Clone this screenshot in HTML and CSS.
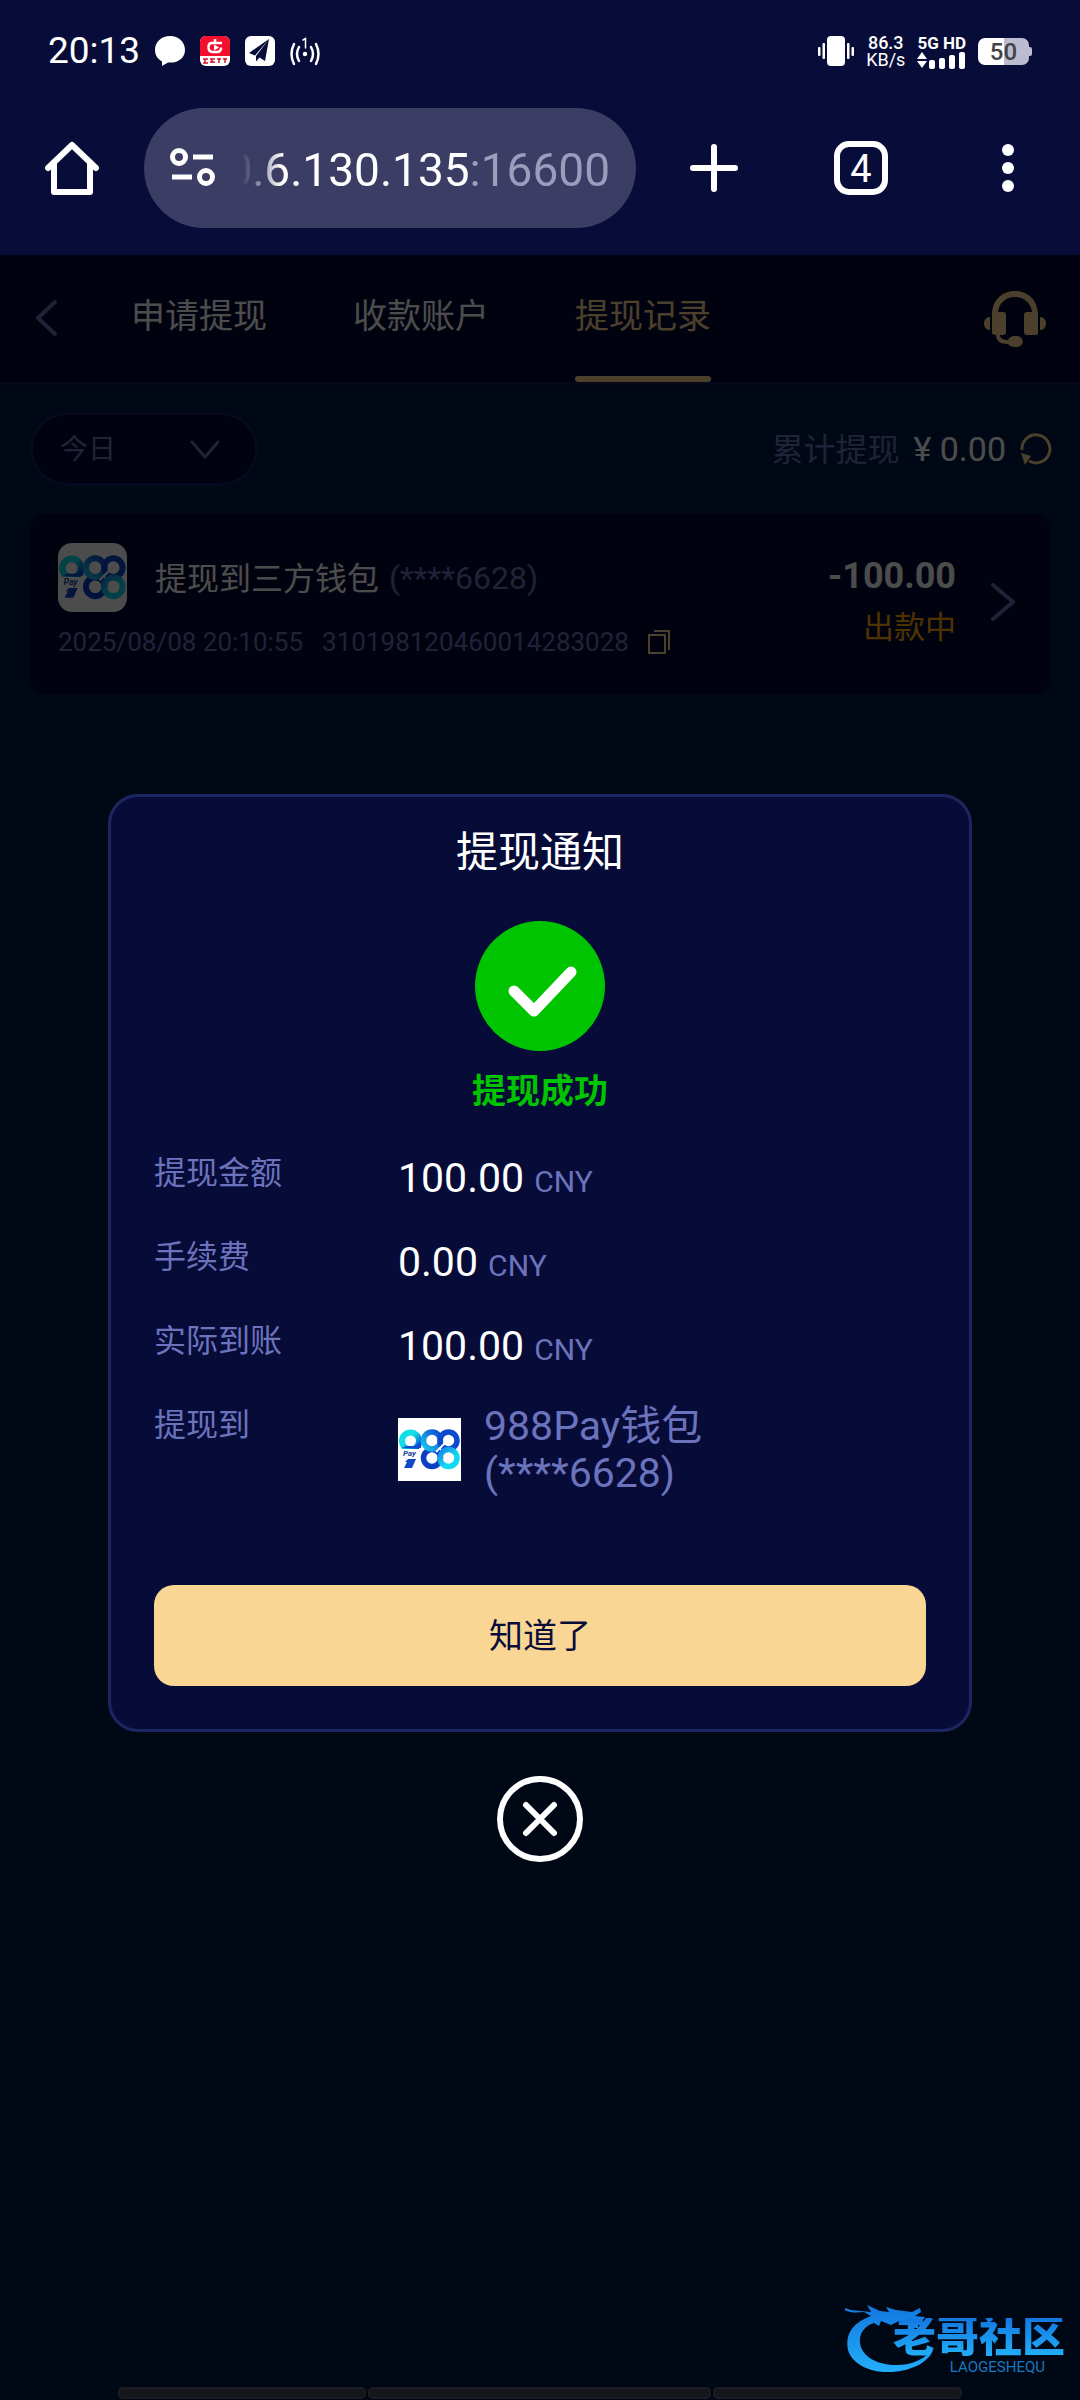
FILE: index.html
```html
<!DOCTYPE html>
<html lang="zh-CN">
<head>
    <meta charset="UTF-8">
    <title>提现记录</title>
    <meta name="viewport" content="width=device-width, initial-scale=1.0">
    <link rel="stylesheet" href="styles.css">
</head>
<body>
    <!-- shared 988Pay logo -->
    <svg class="defs" width="0" height="0" aria-hidden="true">
        <defs>
            <linearGradient id="nine" x1="0" y1="0" x2="1" y2="1">
                <stop offset="0.4" stop-color="#10e0e6"/>
                <stop offset="1" stop-color="#0a3fd6"/>
            </linearGradient>
            <linearGradient id="ring-top" x1="0" y1="1" x2="1" y2="0">
                <stop offset="0" stop-color="#18c8ee"/>
                <stop offset="1" stop-color="#0d49cf"/>
            </linearGradient>
            <linearGradient id="ring-bottom" x1="0" y1="0" x2="1" y2="1">
                <stop offset="0" stop-color="#1685ea"/>
                <stop offset="0.6" stop-color="#12d8f0"/>
            </linearGradient>
            <symbol id="logo-988" viewBox="0 0 63 63">
                <rect width="63" height="63" fill="#fff"/>
                <circle cx="12.500" cy="23" r="8.500" fill="none" stroke="url(#nine)" stroke-width="6"/>
                <path d="M4 30h19l1-8-7 6H8z" fill="#0d4fd0"/>
                <rect x="3" y="31" width="19" height="9" fill="#fff"/>
                <text x="5" y="38" class="logo-pay">Pay</text>
                <path d="M10 41h8l-4 9H6l3-6h-2z" fill="#0c48c8"/>
                <circle cx="34" cy="40" r="8.500" fill="none" stroke="#0b3fc4" stroke-width="5.500"/>
                <circle cx="34" cy="22.500" r="8.500" fill="none" stroke="url(#ring-top)" stroke-width="5.500"/>
                <circle cx="50.500" cy="22.500" r="8.500" fill="none" stroke="#0d49cf" stroke-width="5.500"/>
                <circle cx="50.500" cy="40" r="8.500" fill="none" stroke="url(#ring-bottom)" stroke-width="5.500"/>
                <path d="M38 34l9-9" stroke="#fff" stroke-width="2"/>
            </symbol>
        </defs>
    </svg>

    <div class="status-bar">
        <div class="status-left">
            <span class="clock">20:13</span>
            <svg width="30" height="30" viewBox="0 0 30 30"><path d="M15 0C6.500 0 0 6 0 14c0 5 2.500 9 7 11.500V30l6-3.500c10 1 17-4.500 17-12.500C30 6 23.500 0 15 0z" fill="#fff"/></svg>
            <svg width="30" height="30" viewBox="0 0 30 30">
                <rect width="30" height="30" rx="6" fill="#fff"/>
                <path d="M6 0h18a6 6 0 0 1 6 6v14H0V6a6 6 0 0 1 6-6z" fill="#f4102c"/>
                <path d="M22 7H12c-3 0-3.500 2-3.500 4s.5 5 4 5H17c3 0 4-1.500 4-4.500M15 3v4" fill="none" stroke="#fff" stroke-width="2.500"/>
                <path d="M14 8.500l5 3-5 3z" fill="#fff"/>
                <path d="M3 23h5M5 23v4M3 27h5M10 23h5M12 23v4M17 23h4M19 22v5M23 23h4M25 22v5M10 26h5" stroke="#d8152c" stroke-width="1.500"/>
            </svg>
            <svg width="30" height="30" viewBox="0 0 30 30">
                <rect width="30" height="30" rx="6" fill="#fff"/>
                <path d="M24 3L4 17l6 2.500zM24 3L11 20v5.500l3.500-4L20 25z" fill="#080c39"/>
            </svg>
            <svg width="30" height="30" viewBox="0 0 30 30" fill="none" stroke="#fff" stroke-width="2.500" stroke-linecap="round">
                <circle cx="15" cy="18" r="2.200" fill="#fff" stroke="none"/>
                <path d="M9 11q-4 7 0 14M21 11q4 7 0 14M4 8q-5 10 0 20M26 8q5 10 0 20"/>
                <path d="M13 4l2.500-1.500V12" stroke-width="1.500"/>
            </svg>
        </div>
        <div class="status-right">
            <svg width="36" height="30" viewBox="0 0 36 30" fill="#fff">
                <rect x="9" width="18" height="30" rx="4"/>
                <rect x="4.500" y="7" width="2.500" height="16" rx="1"/><rect x="29" y="7" width="2.500" height="16" rx="1"/>
                <rect y="11" width="2.500" height="9" rx="1"/><rect x="33.500" y="11" width="2.500" height="9" rx="1"/>
            </svg>
            <div class="speed"><b>86.3</b><span>KB/s</span></div>
            <div class="signal">
                <b>5G HD</b>
                <svg width="48" height="17" viewBox="0 0 48 17" fill="#fff">
                    <path d="M0 7l5-7 5 7zM0 9h10l-5 7z"/>
                    <rect x="12" y="8" width="6" height="9" rx="2"/><rect x="22" y="6" width="6" height="11" rx="2"/>
                    <rect x="32" y="3" width="6" height="14" rx="2"/><rect x="42" width="6" height="17" rx="2"/>
                </svg>
            </div>
            <div class="battery"><span>50</span></div>
        </div>
    </div>

    <div class="toolbar">
        <button class="tool" aria-label="主页">
            <svg width="54" height="54" viewBox="0 0 54 54" fill="none" stroke="#fff" stroke-width="6" stroke-linecap="round" stroke-linejoin="round">
                <path d="M3 27L27 4l24 23M9 23v28h36V23"/>
            </svg>
        </button>
        <button class="address">
            <svg width="46" height="40" viewBox="0 0 46 40" fill="none" stroke="#fff" stroke-width="5">
                <circle cx="9" cy="9" r="6.500"/><path d="M23 9h20M2 29h20"/><circle cx="36" cy="29" r="6.500"/>
            </svg>
            <span class="url"><span>0.6.130.135</span><span class="port">:16600</span></span>
        </button>
        <div class="tools">
            <button class="tool" aria-label="新标签页">
                <svg width="48" height="48" viewBox="0 0 48 48" stroke="#fff" stroke-width="6" stroke-linecap="round"><path d="M24 3v42M3 24h42"/></svg>
            </button>
            <button class="tool"><span class="tab-count">4</span></button>
            <button class="tool" aria-label="菜单">
                <svg width="12" height="48" viewBox="0 0 12 48" fill="#fff"><circle cx="6" cy="6" r="6"/><circle cx="6" cy="24" r="6"/><circle cx="6" cy="42" r="6"/></svg>
            </button>
        </div>
    </div>

    <main class="page">
        <header class="page-header">
            <button class="back" aria-label="返回">
                <svg width="22" height="36" viewBox="0 0 22 36" fill="none" stroke="#6c73bd" stroke-width="4" stroke-linecap="round" stroke-linejoin="round"><path d="M19 2L2 18l17 16"/></svg>
            </button>
            <nav class="tabs">
                <a href="#">申请提现</a>
                <a href="#">收款账户</a>
                <a href="#" class="active">提现记录</a>
            </nav>
            <button class="service" aria-label="客服">
                <svg width="62" height="56" viewBox="0 0 62 56" fill="#f9d693">
                    <path d="M8 42V24C8 9 18 0 31 0s23 9 23 24v18a2 2 0 0 1-2 2h-9a3 3 0 0 1-3-3V24a3 3 0 0 1 3-3h5C47 12 40 6 31 6S15 12 14 21h5a3 3 0 0 1 3 3v17a3 3 0 0 1-3 3h-3c0 3 3 5 8 5 2-4 5-4 8-4 9 0 9 11 0 11-3 0-5 0-8-3-8 0-12-3-12-9-2 0-4-1-4-2z"/>
                    <path d="M6 26v13c-8 0-8-13 0-13zM56 26v13c8 0 8-13 0-13z"/>
                </svg>
            </button>
        </header>

        <div class="filter-row">
            <div class="filter">
                <select aria-label="日期"><option>今日</option></select>
                <svg width="30" height="20" viewBox="0 0 30 20" fill="none" stroke="#6c73bd" stroke-width="3" stroke-linecap="round" stroke-linejoin="round"><path d="M2 2l13 15L28 2"/></svg>
            </div>
            <div class="total">
                <span class="total-label">累计提现</span>
                <span class="total-value">¥ 0.00</span>
                <button aria-label="刷新">
                    <svg width="32" height="32" viewBox="0 0 32 32"><path d="M2 17A14 14 0 1 1 9 28" fill="none" stroke="#f9d693" stroke-width="3"/><path d="M1 20l10 3-6 9z" fill="#f9d693"/></svg>
                </button>
            </div>
        </div>

        <section class="record">
            <div class="record-main">
                <div class="record-title">
                    <svg class="record-logo" viewBox="0 0 63 63"><use href="#logo-988"/></svg>
                    <span class="record-name">提现到三方钱包</span>
                    <span class="account">(****6628)</span>
                </div>
                <div class="record-meta">
                    <span>2025/08/08 20:10:55</span>
                    <span>310198120460014283028</span>
                    <button aria-label="复制">
                        <svg width="22" height="24" viewBox="0 0 22 24" fill="none" stroke="#f9d693" stroke-width="2"><path d="M1 5h16v18H1zM6 1h15v19"/></svg>
                    </button>
                </div>
            </div>
            <div class="record-side">
                <strong>-100.00</strong>
                <span class="pending">出款中</span>
            </div>
            <svg width="24" height="38" viewBox="0 0 24 38" fill="none" stroke="#6c73bd" stroke-width="4" stroke-linecap="round" stroke-linejoin="round"><path d="M2 2l20 17L2 36"/></svg>
        </section>

        <div class="bottom-bar"><i></i><i></i><i></i></div>

        <div class="overlay">
            <div class="dialog" role="dialog" aria-labelledby="dialog-title">
                <h2 id="dialog-title">提现通知</h2>
                <svg class="success" viewBox="0 0 130 130">
                    <circle cx="65" cy="65" r="65" fill="#00c400"/>
                    <path d="M39 70l20 20 37-39" fill="none" stroke="#fff" stroke-width="11" stroke-linecap="round" stroke-linejoin="round"/>
                </svg>
                <p class="result">提现成功</p>
                <dl class="details">
                    <dt>提现金额</dt>
                    <dd>100.00 <small>CNY</small></dd>
                    <dt>手续费</dt>
                    <dd>0.00 <small>CNY</small></dd>
                    <dt>实际到账</dt>
                    <dd>100.00 <small>CNY</small></dd>
                    <dt>提现到</dt>
                    <dd class="wallet">
                        <svg viewBox="0 0 63 63"><use href="#logo-988"/></svg>
                        <span>988Pay钱包<br>(****6628)</span>
                    </dd>
                </dl>
                <button class="confirm">知道了</button>
            </div>
            <button class="close" aria-label="关闭">
                <svg width="86" height="86" viewBox="0 0 86 86" fill="none" stroke="#fff" stroke-width="6" stroke-linecap="round"><circle cx="43" cy="43" r="40"/><path d="M29 29l28 28M57 29L29 57"/></svg>
            </button>
        </div>

        <div class="watermark">
            <svg width="96" height="72" viewBox="0 0 96 72">
                <defs>
                    <linearGradient id="dragon" x1="0" y1="0" x2="0" y2="1">
                        <stop offset="0" stop-color="#1277e0"/>
                        <stop offset="1" stop-color="#22aef9"/>
                    </linearGradient>
                </defs>
                <path d="M26 12C6 19 0 32 3 46c4 14 22 23 43 22 22-1 40-11 43-25-8 12-22 18-37 18-20 0-35-8-37-22-1-9 4-17 14-20l5 3 2-5 10 4 8-4 10 5c4 2 6 2 9 2v-4l-8-2 12-1 3-4-10-1 6-4-1-4-8 4-16-2-10-3 3 5-9-1-13-6 4 7-20-2-9-3c3 6 14 6 22 5z" fill="url(#dragon)"/>
            </svg>
            <div class="watermark-text">
                <b>老哥社区</b>
                <span>LAOGESHEQU</span>
            </div>
        </div>
    </main>
</body>
</html>
```
FILE: styles.css
```css
* {
    box-sizing: border-box;
}
body {
    margin: 0;
    min-height: 100vh;
    display: flex;
    flex-direction: column;
    background: #080c39;
    color: #fff;
    font-family: Roboto, "Noto Sans CJK SC", sans-serif;
}
button {
    padding: 0;
    border: none;
    background: none;
    color: inherit;
    font-family: inherit;
    cursor: pointer;
}
svg {
    display: block;
    flex-shrink: 0;
}
.defs {
    position: absolute;
}
.logo-pay {
    font-size: 8px;
    font-weight: bold;
    font-style: italic;
    fill: #12409c;
}

/* phone status bar */
.status-bar {
    height: 102px;
    padding: 0 51px 0 48px;
    display: flex;
    justify-content: space-between;
    align-items: center;
}
.status-left {
    display: flex;
    align-items: center;
    gap: 15px;
}
.clock {
    font-size: 37px;
    line-height: 44px;
}
.status-right {
    display: flex;
    align-items: center;
    gap: 12px;
}
.speed {
    display: flex;
    flex-direction: column;
    align-items: center;
    font-size: 18px;
    line-height: 17px;
}
.speed b {
    font-weight: 500;
}
.signal {
    display: flex;
    flex-direction: column;
    font-size: 17px;
    line-height: 18px;
}
.battery {
    position: relative;
    width: 51px;
    height: 27px;
    border-radius: 7px;
    background: linear-gradient(90deg, #fff 50%, #bcbbd0 50%);
    color: #444;
    font-size: 24px;
    font-weight: 500;
    line-height: 28px;
    text-align: center;
}
.battery::after {
    content: "";
    position: absolute;
    left: 100%;
    top: 9px;
    width: 3px;
    height: 9px;
    background: #bcbbd0;
    border-radius: 0 2px 2px 0;
}

/* browser toolbar */
.toolbar {
    height: 153px;
    padding: 6px 36px 27px;
    display: flex;
    align-items: center;
}
.tool {
    width: 72px;
    height: 72px;
    display: flex;
    align-items: center;
    justify-content: center;
}
.tools {
    display: flex;
    gap: 75px;
}
.address {
    flex: 1;
    min-width: 0;
    height: 120px;
    margin: 0 42px 0 36px;
    padding: 0 26px;
    display: flex;
    align-items: center;
    gap: 26px;
    border-radius: 60px;
    background: #3c3d64;
}
.url {
    flex: 1;
    display: flex;
    justify-content: flex-end;
    overflow: hidden;
    padding-top: 4px;
    font-size: 46px;
    line-height: 60px;
    -webkit-mask-image: linear-gradient(90deg, transparent, #000 40px);
    mask-image: linear-gradient(90deg, transparent, #000 40px);
}
.port {
    color: #9c9dbd;
}
.tab-count {
    width: 54px;
    height: 54px;
    border: 6px solid #fff;
    border-radius: 15px;
    font-size: 38px;
    line-height: 44px;
}

/* withdrawal page */
.page {
    flex: 1;
    position: relative;
    background: #041b46;
}
.page-header {
    height: 130px;
    padding: 0 34px 0 36px;
    display: flex;
    background: #050732;
    border-bottom: 3px solid #1a1f5c;
}
.back {
    width: 95px;
    height: 126px;
    display: flex;
    align-items: center;
}
.tabs {
    flex: 1;
    display: flex;
    gap: 86px;
}
.tabs a {
    position: relative;
    height: 127px;
    color: #fff;
    font-size: 34px;
    line-height: 122px;
    text-decoration: none;
}
.tabs .active {
    color: #f9d693;
}
.tabs .active::after {
    content: "";
    position: absolute;
    left: 0;
    right: 0;
    bottom: 0;
    height: 6px;
    border-radius: 3px;
    background: #f9d693;
}
.filter-row {
    margin: 27px 28px 28px 30px;
    display: flex;
    justify-content: space-between;
    align-items: center;
}
.filter {
    position: relative;
    width: 228px;
}
.filter select {
    appearance: none;
    width: 100%;
    height: 74px;
    padding: 0 27px;
    border: 3px solid #1a2164;
    border-radius: 37px;
    background: #050732;
    color: #6c73bd;
    font-family: inherit;
    font-size: 28px;
}
.filter svg {
    position: absolute;
    right: 38px;
    top: 28px;
    pointer-events: none;
}
.total {
    display: flex;
    align-items: center;
    gap: 14px;
}
.total-label {
    padding-bottom: 4px;
    color: #6c73bd;
    font-size: 32px;
}
.total-value {
    font-size: 34px;
}
.record {
    margin: 0 29px;
    padding: 29px 36px 34px 29px;
    display: flex;
    align-items: center;
    gap: 35px;
    border-radius: 18px;
    background: #050732;
}
.record-main {
    flex: 1;
    display: flex;
    flex-direction: column;
    gap: 12px;
}
.record-title {
    display: flex;
    align-items: center;
    font-size: 32px;
}
.record-name {
    padding-bottom: 4px;
}
.record-logo {
    width: 69px;
    height: 69px;
    margin-right: 28px;
    border-radius: 14px;
}
.account {
    margin-left: 10px;
    color: #6c73bd;
}
.record-meta {
    display: flex;
    align-items: center;
    gap: 19px;
    color: #6c73bd;
    font-size: 26px;
    line-height: 36px;
}
.record-side {
    display: flex;
    flex-direction: column;
    align-items: flex-end;
    font-size: 36px;
    line-height: 52px;
}
.record-side strong {
    font-weight: 700;
}
.pending {
    color: #ffaa00;
    font-size: 31px;
}
.bottom-bar {
    position: absolute;
    left: 118px;
    right: 118px;
    bottom: 1px;
    display: grid;
    grid-template-columns: 248fr 343fr 249fr;
    gap: 2px;
}
.bottom-bar i {
    height: 12px;
    border: 2px solid #5a5c78;
    border-radius: 5px;
    background: #444a5c;
}

/* notice dialog */
.overlay {
    position: absolute;
    inset: 0;
    display: flex;
    flex-direction: column;
    align-items: center;
    justify-content: center;
    background: rgba(0, 0, 0, 0.7);
}
.dialog {
    width: 80%;
    padding: 24px 43px 43px;
    border: 3px solid #1d2660;
    border-radius: 30px;
    background: #070b38;
}
.dialog h2 {
    margin: 0 0 36px;
    font-size: 42px;
    font-weight: 400;
    line-height: 64px;
    text-align: center;
}
.success {
    width: 130px;
    height: 130px;
    margin: 0 auto;
}
.result {
    margin: 16px 0 36px;
    color: #00c400;
    font-size: 34px;
    font-weight: 700;
    line-height: 48px;
    text-align: center;
}
.details {
    margin: 0 0 88px;
    display: grid;
    grid-template-columns: 244px 1fr;
    row-gap: 30px;
}
.details dt {
    color: #6c73bd;
    font-size: 32px;
    line-height: 44px;
}
.details dd {
    margin: 0;
    font-size: 41px;
    line-height: 54px;
}
.details small {
    color: #6c73bd;
    font-size: 30px;
    line-height: 30px;
}
.details .wallet {
    display: flex;
    align-items: center;
    gap: 23px;
    color: #6c73bd;
    line-height: 47px;
}
.wallet svg {
    width: 63px;
    height: 63px;
}
.confirm {
    display: block;
    width: 100%;
    height: 101px;
    padding-bottom: 4px;
    border-radius: 20px;
    background: #f9d693;
    color: #080c39;
    font-size: 34px;
}
.close {
    margin-top: 44px;
}

/* community watermark */
.watermark {
    position: absolute;
    right: 15px;
    bottom: 24px;
    display: flex;
}
.watermark-text {
    margin-left: -48px;
    padding-top: 14px;
    display: flex;
    flex-direction: column;
    align-items: flex-end;
    gap: 4px;
}
.watermark-text b {
    font-size: 43px;
    font-weight: 900;
    line-height: 38px;
    background: linear-gradient(#1277e0, #22aef9);
    -webkit-background-clip: text;
    background-clip: text;
    color: transparent;
}
.watermark-text span {
    padding-right: 20px;
    color: #1878bd;
    font-size: 15px;
    line-height: 14px;
}
```
